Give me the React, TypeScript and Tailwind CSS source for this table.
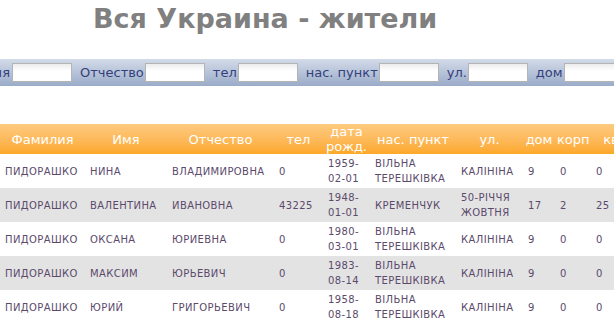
import React from 'react';

const rows = [
  ['ПИДОРАШКО', 'НИНА', 'ВЛАДИМИРОВНА', '0', '1959-02-01', 'ВІЛЬНА ТЕРЕШКІВКА', 'КАЛІНІНА', '9', '0', '0'],
  ['ПИДОРАШКО', 'ВАЛЕНТИНА', 'ИВАНОВНА', '43225', '1948-01-01', 'КРЕМЕНЧУК', '50-РІЧЧЯ ЖОВТНЯ', '17', '2', '25'],
  ['ПИДОРАШКО', 'ОКСАНА', 'ЮРИЕВНА', '0', '1980-03-01', 'ВІЛЬНА ТЕРЕШКІВКА', 'КАЛІНІНА', '9', '0', '0'],
  ['ПИДОРАШКО', 'МАКСИМ', 'ЮРЬЕВИЧ', '0', '1983-08-14', 'ВІЛЬНА ТЕРЕШКІВКА', 'КАЛІНІНА', '9', '0', '0'],
  ['ПИДОРАШКО', 'ЮРИЙ', 'ГРИГОРЬЕВИЧ', '0', '1958-08-18', 'ВІЛЬНА ТЕРЕШКІВКА', 'КАЛІНІНА', '9', '0', '0'],
];

const headers = ['Фамилия', 'Имя', 'Отчество', 'тел', 'дата рожд.', 'нас. пункт', 'ул.', 'дом', 'корп', 'кв'];
const widths = ['w-[85px]', 'w-[82px]', 'w-[107px]', 'w-[49px]', 'w-[47px]', 'w-[86px]', 'w-[67px]', 'w-[32px]', 'w-[36px]', 'w-[40px]'];

const Field = ({ label }: { label: string }) => (
  <div className="flex items-center shrink-0 gap-[1px] mr-[8px]">
    <span>{label}</span>
    <input className="w-[60px] h-[19px] border border-[#b4b4b4] bg-gradient-to-b from-[#ececec] to-white to-40% outline-none" />
  </div>
);

export default function App() {
  return (
    <div className="w-[614px] h-[333px] overflow-hidden bg-white font-['DejaVu_Sans',sans-serif]">
      <h1 className="pl-[93px] pt-[1px] h-[59px] text-[27px] font-bold text-[#808080] whitespace-nowrap leading-[36px]">
        Вся Украина - жители
      </h1>

      {/* search bar */}
      <div className="h-[27px] flex items-center bg-gradient-to-b from-[#d3dbe8] to-[#9aabc9] text-[13px] text-[#34407c] whitespace-nowrap">
        <div className="w-[12px] shrink-0 flex justify-end">
          <div className="flex items-center shrink-0">
            <Field label="Фамилия" />
            <span className="mr-[2px]">Имя</span>
          </div>
        </div>
        <input className="w-[60px] h-[19px] shrink-0 mr-[8px] border border-[#b4b4b4] bg-gradient-to-b from-[#ececec] to-white to-40% outline-none" />
        <Field label="Отчество" />
        <Field label="тел" />
        <Field label="нас. пункт" />
        <Field label="ул." />
        <Field label="дом" />
        <Field label="корп" />
      </div>

      <table className="mt-[38px] table-fixed border-collapse w-[631px]">
        <thead>
          <tr className="h-[29px] bg-gradient-to-b from-[#fdcb80] to-[#fda827] text-white text-[13px]">
            {headers.map((h, i) => (
              <th key={i} className={`${widths[i]} font-normal leading-[15px] px-[2px] text-center`}>
                {h}
              </th>
            ))}
          </tr>
        </thead>
        <tbody>
          {rows.map((r, ri) => (
            <tr key={ri} className={`h-[34px] ${ri % 2 === 1 ? 'bg-[#e3e3e3]' : 'bg-white'}`}>
              {r.map((c, ci) => (
                <td key={ci} className="pl-[5px] pr-0 text-[10px] leading-[15px] tracking-[0.4px] text-[#5b4a6c] align-middle">
                  {c}
                </td>
              ))}
            </tr>
          ))}
        </tbody>
      </table>
    </div>
  );
}
